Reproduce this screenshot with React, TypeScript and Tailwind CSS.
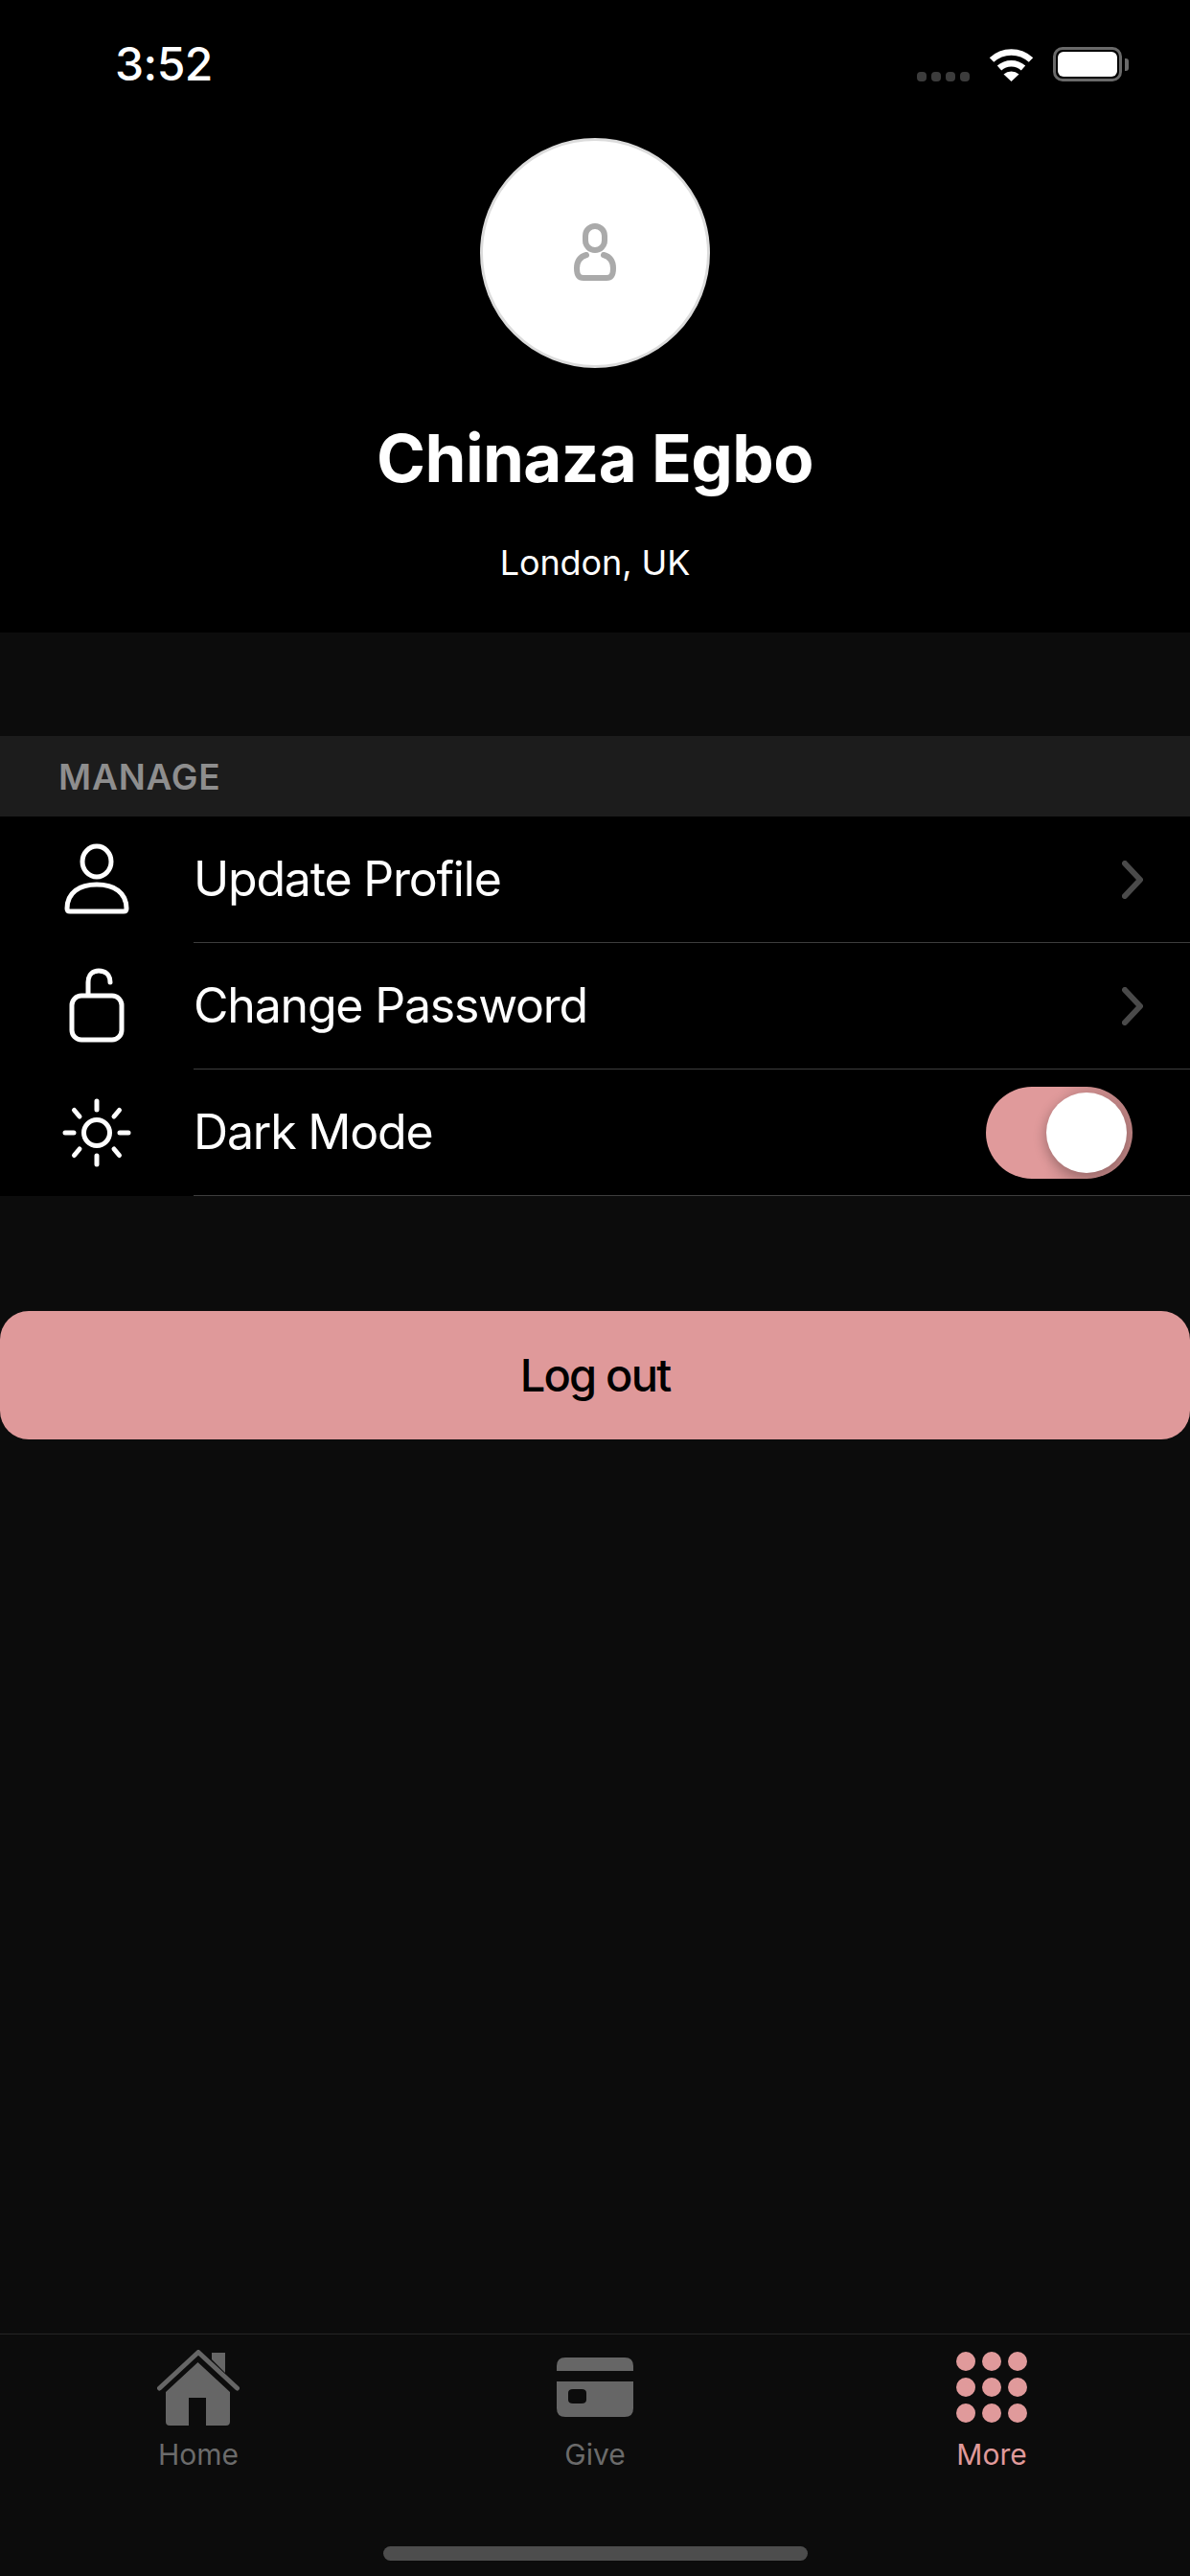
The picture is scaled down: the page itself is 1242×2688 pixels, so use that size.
import React from 'react';

function SettingRow({ icon, label, children }: { icon: React.ReactNode; label: string; children: React.ReactNode }) {
  return (
    <div className="flex h-[132px] bg-black">
      <div className="flex w-[202px] shrink-0 items-center justify-center">{icon}</div>
      <div className="flex flex-1 items-center justify-between border-b border-[#3d3d3d]">
        <span className="mb-[2px] text-[50px] leading-none tracking-[-1.2px] text-white">{label}</span>
        {children}
      </div>
    </div>
  );
}

function Chevron() {
  return (
    <svg width="22" height="40" viewBox="0 0 22 40" className="mr-[49px]" fill="none">
      <path d="M3 3 L19 20 L3 37" stroke="#4a4a4a" strokeWidth="6" strokeLinecap="round" strokeLinejoin="round" />
    </svg>
  );
}

function TabItem({ icon, label, active }: { icon: React.ReactNode; label: string; active?: boolean }) {
  return (
    <div className="flex w-[414px] flex-col items-center">
      <div className="flex h-[80px] items-center justify-center">{icon}</div>
      <span className={`mt-[12px] text-[30px] leading-[36px] ${active ? 'text-[#e09a9b]' : 'text-[#6b6b6b]'}`}>{label}</span>
    </div>
  );
}

export default function App() {
  return (
    <div className="flex h-[2688px] w-[1242px] flex-col overflow-hidden bg-[#0c0c0c] font-['Inter',sans-serif]">
      <div className="flex h-[660px] flex-col items-center bg-black">
        {/* status bar */}
        <div className="flex h-[144px] w-full items-start justify-between pl-[120px] pr-[64px] pt-[40px]">
          <span className="text-[48px] font-medium leading-[54px] tracking-[-0.5px] text-white">3:52</span>
          <div className="flex items-start pt-[9px]">
            <div className="mr-[20px] mt-[26px] flex gap-[5px]">
              <div className="h-[10px] w-[10px] rounded-[4px] bg-[#3c3c3c]" />
              <div className="h-[10px] w-[10px] rounded-[4px] bg-[#3c3c3c]" />
              <div className="h-[10px] w-[10px] rounded-[4px] bg-[#3c3c3c]" />
              <div className="h-[10px] w-[10px] rounded-[4px] bg-[#3c3c3c]" />
            </div>
            <svg width="47" height="36" viewBox="0 0 47 36" className="mr-[20px]" fill="none">
              <path d="M3 13.5 A30 30 0 0 1 44 13.5" stroke="#fff" strokeWidth="6.5" />
              <path d="M11 22 A18.5 18.5 0 0 1 36 22" stroke="#fff" strokeWidth="6.5" />
              <path d="M15.5 28.5 L23.5 36 L31.5 28.5 A12 12 0 0 0 15.5 28.5 Z" fill="#fff" />
            </svg>
            <div className="flex items-center">
              <div className="h-[36px] w-[72px] rounded-[10px] border-[3px] border-[#6a6a6a] p-[2px]">
                <div className="h-full w-full rounded-[6px] bg-white" />
              </div>
              <div className="ml-[3px] h-[13px] w-[4px] rounded-r-[3px] bg-[#6a6a6a]" />
            </div>
          </div>
        </div>

        <div className="flex h-[240px] w-[240px] items-center justify-center rounded-full border-[3px] border-[#dcdcdc] bg-white">
          <svg width="44" height="60" viewBox="0 0 44 60" fill="none" className="mb-[2px]">
            <rect x="12" y="3" width="20" height="25" rx="10" stroke="#aaaaaa" strokeWidth="6" />
            <path d="M13 33 C6 35 3 40 3 47 C3 54 5 57 10 57 L34 57 C39 57 41 54 41 47 C41 40 38 35 31 33" stroke="#aaaaaa" strokeWidth="6" strokeLinecap="round" />
          </svg>
        </div>
        <h1 className="mt-[52px] text-[69px] font-bold leading-[84px] tracking-[-0.6px] text-white">Chinaza Egbo</h1>
        <p className="mt-[45px] text-[36px] leading-[44px] tracking-[-0.1px] text-white">London, UK</p>
      </div>

      <div className="mt-[108px] flex h-[84px] items-center bg-[#1c1c1c] pl-[61px]">
        <span className="text-[37px] font-semibold leading-none tracking-[0.8px] text-[#8e8e8e]">MANAGE</span>
      </div>

      <SettingRow
        label="Update Profile"
        icon={
          <svg width="68" height="74" viewBox="0 0 68 74" fill="none" stroke="#fff" strokeWidth="5" className="mt-[-2px]">
            <ellipse cx="34" cy="19" rx="15" ry="16" />
            <path d="M3 68 C3 51 16 43 34 43 C52 43 65 51 65 68 C65 70 64 71 62 71 L6 71 C4 71 3 70 3 68 Z" strokeLinejoin="round" />
          </svg>
        }
      >
        <Chevron />
      </SettingRow>
      <SettingRow
        label="Change Password"
        icon={
          <svg width="58" height="78" viewBox="0 0 58 78" fill="none" stroke="#fff" strokeWidth="5" className="mt-[-2px]">
            <rect x="3" y="29" width="52" height="46" rx="10" />
            <path d="M20 28 V15 C20 7 25 3 31 3 C38 3 43 7 43 15" strokeLinecap="round" />
          </svg>
        }
      >
        <Chevron />
      </SettingRow>
      <SettingRow
        label="Dark Mode"
        icon={
          <svg width="72" height="72" viewBox="0 0 72 72" fill="none" stroke="#fff" strokeWidth="5" strokeLinecap="round">
            <circle cx="36" cy="36" r="13.5" />
            <path d="M36 3 V12 M36 60 V69 M3 36 H12 M60 36 H69 M12.5 12.5 L18 19 M59.5 12.5 L54 19 M12.5 59.5 L18 53 M59.5 59.5 L54 53" />
          </svg>
        }
      >
        {/* toggle */}
        <div className="mr-[60px] flex h-[96px] w-[153px] items-center justify-end rounded-full bg-[linear-gradient(100deg,#e09a9b_45%,#b98080_90%)] pr-[6px]">
          <div className="h-[84px] w-[84px] rounded-full bg-white shadow-[-2px_4px_12px_rgba(0,0,0,0.25)]" />
        </div>
      </SettingRow>

      <button className="mt-[120px] flex h-[134px] w-full items-center justify-center rounded-[30px] bg-[#df999a] text-[47px] font-medium tracking-[-1.8px] text-black">
        Log out
      </button>

      {/* tab bar */}
      <div className="mt-auto flex h-[253px] flex-col border-t border-[#252525]">
        <div className="flex pt-[15px]">
          <TabItem
            label="Home"
            icon={
              <svg width="86" height="79" viewBox="0 0 86 79" fill="#666666">
                <path d="M2.5 40 L43 2.5 L83.5 40" fill="none" stroke="#666666" strokeWidth="5" strokeLinecap="round" strokeLinejoin="round" />
                <path d="M57 3 H71 V24 L57 10 Z" />
                <path d="M42.5 13 L76 44 V75 Q76 79 72 79 H51 V50 H33 V79 H13 Q9 79 9 75 V44 Z" />
              </svg>
            }
          />
          <TabItem
            label="Give"
            icon={
              <svg width="80" height="62" viewBox="0 0 80 62" fill="#666666">
                <path d="M0 14 V9 Q0 0 9 0 H71 Q80 0 80 9 V14 Z" />
                <path fillRule="evenodd" d="M0 25 H80 V53 Q80 62 71 62 H9 Q0 62 0 53 Z M17 33 Q12 33 12 37 V44 Q12 48 17 48 H26 Q31 48 31 44 V37 Q31 33 26 33 Z" />
              </svg>
            }
          />
          <TabItem
            active
            label="More"
            icon={
              <div className="grid grid-cols-3 gap-[7px]">
                {Array.from({ length: 9 }).map((_, i) => (
                  <div key={i} className="h-[20px] w-[20px] rounded-full bg-[#e09a9b]" />
                ))}
              </div>
            }
          />
        </div>
        <div className="mx-auto mt-[78px] h-[15px] w-[443px] rounded-full bg-[#4d4d4d]" />
      </div>
    </div>
  );
}
